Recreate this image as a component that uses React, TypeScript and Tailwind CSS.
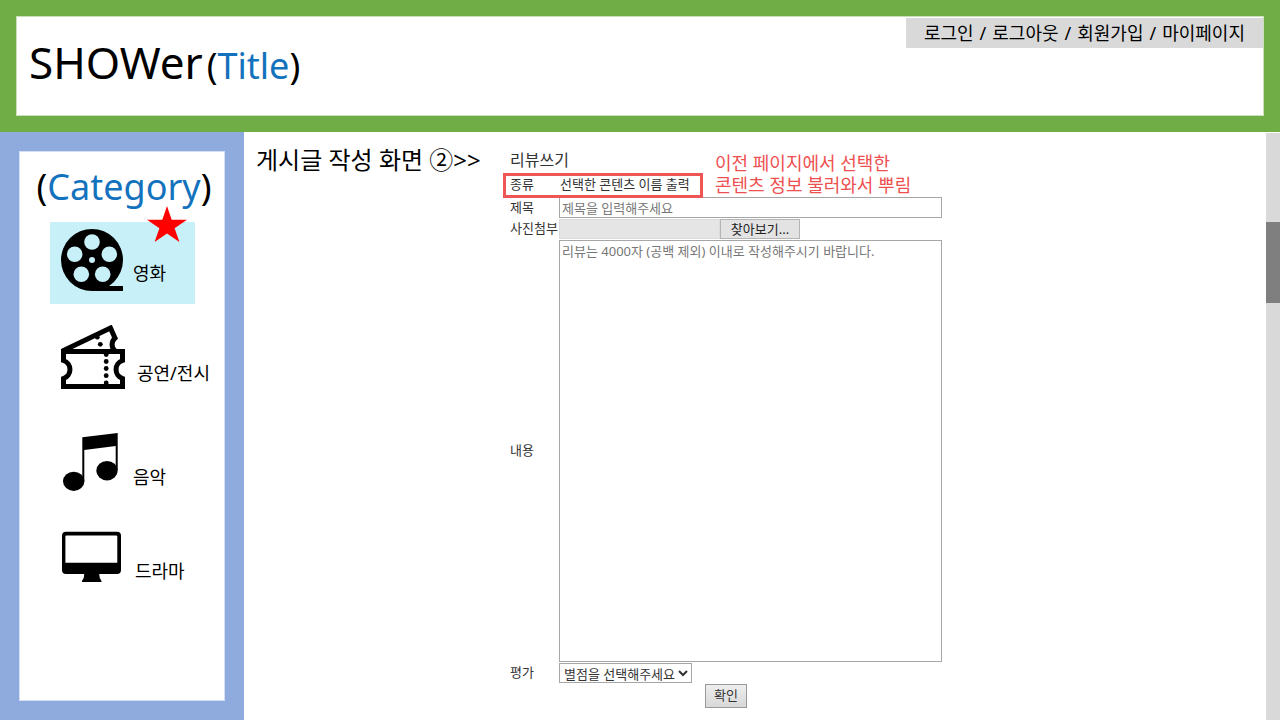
import { useRef, useState } from "react";
import type { ReactNode } from "react";

function ReelIcon() {
  return (
    <svg viewBox="0 0 64 64" className="size-16 shrink-0" aria-hidden="true">
      <circle cx="31" cy="31" r="31" />
      <path d="M31 56 L47 57 H62 V62 H31 Z" />
      <g fill="#c8f0f8">
        <circle cx="31" cy="13" r="7.8" />
        <circle cx="13.7" cy="25.3" r="7.8" />
        <circle cx="48.3" cy="25.3" r="7.8" />
        <circle cx="20.3" cy="45.3" r="7.8" />
        <circle cx="41.7" cy="45.3" r="7.8" />
        <circle cx="31" cy="31" r="3" />
      </g>
    </svg>
  );
}

function TicketIcon() {
  return (
    <svg viewBox="0 0 64 64" className="size-16 shrink-0" aria-hidden="true">
      <g fill="none" stroke="#000" strokeWidth="5">
        <path d="M2.5 26.5 H61.5 V35.5 A9.5 9.5 0 0 0 61.5 53.5 V61.5 H2.5 V53.5 A9.5 9.5 0 0 0 2.5 35.5 Z" />
        <path d="M1.5 26 L49.5 3 L54 13.2 A8.5 8.5 0 0 0 54 26" />
      </g>
      <circle cx="45.2" cy="29.5" r="2.4" />
      <circle cx="45.2" cy="36.5" r="2.4" />
      <circle cx="45.2" cy="43.5" r="2.4" />
      <circle cx="45.2" cy="50.7" r="2.4" />
      <circle cx="45.2" cy="58" r="2.4" />
      <circle cx="39.3" cy="19.3" r="2.4" />
      <circle cx="36.3" cy="12.2" r="2.4" />
    </svg>
  );
}

function MusicIcon() {
  return (
    <svg viewBox="0 0 64 64" className="size-16 shrink-0" aria-hidden="true">
      <path d="M21.3 10.3 L56.7 6 V43 H54.7 V19 L23.3 23 V54 H21.3 Z" />
      <ellipse cx="12.7" cy="54.3" rx="10.7" ry="9.6" />
      <ellipse cx="46" cy="43.7" rx="10.7" ry="9.7" />
    </svg>
  );
}

function MonitorIcon() {
  return (
    <svg viewBox="0 0 64 64" className="size-16 shrink-0" aria-hidden="true">
      <path
        fillRule="evenodd"
        d="M5 2.7 H56 Q60 2.7 60 6.7 V41 Q60 45 56 45 H38.2 Q38.2 49 40.5 52 V53 H21 V52 Q23.3 49 23.3 45 H5 Q1 45 1 41 V6.7 Q1 2.7 5 2.7 Z M5.4 6.4 Q4.4 6.4 4.4 7.4 V33.7 H56.3 V7.4 Q56.3 6.4 55.3 6.4 Z"
      />
    </svg>
  );
}

function Category({ icon, label, labelClass }: { icon: ReactNode; label: string; labelClass: string }) {
  return (
    <a href="#" className="flex items-end gap-2 text-lg/6 text-black">
      {icon}
      <span className={labelClass}>{label}</span>
    </a>
  );
}

function ReviewForm() {
  const picker = useRef<HTMLInputElement>(null);
  const [fileName, setFileName] = useState("");
  return (
    <form className="relative w-[432px] pt-4 text-[13px] text-[#333]" onSubmit={(e) => e.preventDefault()}>
      <h2 className="text-base/6">리뷰쓰기</h2>
      <div className="relative flex h-[25px] items-center">
        <span className="w-[50px] shrink-0">종류</span>
        <span>선택한 콘텐츠 이름 출력</span>
        <div className="pointer-events-none absolute -left-[7px] top-px z-10 h-[25px] w-[200px] border-3 border-[#ee5555]" />
      </div>
      <p className="absolute left-[205px] top-5 whitespace-nowrap text-lg/[22px] text-[#ee5050]">
        이전 페이지에서 선택한
        <br />
        콘텐츠 정보 불러와서 뿌림
      </p>
      <div className="flex h-[21px] items-center">
        <label htmlFor="title" className="w-[49px] shrink-0">제목</label>
        <input
          id="title"
          placeholder="제목을 입력해주세요"
          className="h-full min-w-0 grow border border-[#a6a6a6] bg-white px-0.5 placeholder:text-[#777]"
        />
      </div>
      <div className="flex h-[22px] items-center">
        <label htmlFor="attachment" className="w-[49px] shrink-0 whitespace-nowrap">사진첨부</label>
        <input id="attachment" readOnly value={fileName} className="h-5 w-[161px] border border-[#dcdcdc] bg-[#e5e5e5] px-1" />
        <button
          type="button"
          onClick={() => picker.current?.click()}
          className="h-5 w-20 border border-[#b5b5b5] bg-[#e3e3e3] leading-4 text-[#222]"
        >
          찾아보기...
        </button>
        <input
          ref={picker}
          type="file"
          accept="image/*"
          aria-label="사진첨부"
          className="hidden"
          onChange={(e) => setFileName(e.target.files?.[0]?.name ?? "")}
        />
      </div>
      <div className="flex items-center">
        <label htmlFor="content" className="w-[49px] shrink-0">내용</label>
        <textarea
          id="content"
          placeholder="리뷰는 4000자 (공백 제외) 이내로 작성해주시기 바랍니다."
          className="h-[422px] min-w-0 grow resize-none border border-[#a6a6a6] bg-white px-0.5 leading-5 placeholder:text-[#777]"
        />
      </div>
      <div className="flex h-[22px] items-center">
        <label htmlFor="rating" className="w-[49px] shrink-0">평가</label>
        <select id="rating" className="h-5 w-[133px] border border-[#a6a6a6] bg-white">
          <option>별점을 선택해주세요</option>
          <option>★★★★★</option>
          <option>★★★★</option>
          <option>★★★</option>
          <option>★★</option>
          <option>★</option>
        </select>
      </div>
      <div className="flex justify-center">
        <button type="submit" className="h-6 w-[42px] border border-[#999] bg-linear-to-b from-[#eee] to-[#d8d8d8]">
          확인
        </button>
      </div>
    </form>
  );
}

export default function App() {
  return (
    <div className="flex min-h-screen flex-col bg-white font-['Noto_Sans','Noto_Sans_CJK_KR',sans-serif] text-black">
      <header className="border-16 border-[#70ad47] bg-white">
        <div className="flex h-[100px] items-start justify-between border border-[#c9dfba] pl-3 pt-px">
          <h1 className="flex items-baseline gap-1 pt-3 text-[44px]/[64px]">
            <span>SHOWer</span>
            <span className="text-4xl">(<span className="text-[#1372bd]">Title</span>)</span>
          </h1>
          <nav className="flex h-[30px] items-center gap-1.5 bg-[#d9d9d9] px-[18px] text-lg">
            <a href="#">로그인</a>
            <span>/</span>
            <a href="#">로그아웃</a>
            <span>/</span>
            <a href="#">회원가입</a>
            <span>/</span>
            <a href="#">마이페이지</a>
          </nav>
        </div>
      </header>
      <div className="flex grow">
        <aside className="flex w-[244px] shrink-0 bg-[#8faadc] p-[19px]">
          <div className="grow border border-[#d5e0f3] bg-white">
            <h2 className="h-[70px] pl-1 pt-2.5 text-center text-4xl/[50px]">
              (<span className="text-[#1372bd]">Category</span>)
            </h2>
            <ul className="flex flex-col gap-[38px] pl-[41px]">
              <li className="relative -mb-[17px] -ml-[11px] h-[82px] w-[145px] bg-[#c8f0f8] pl-[11px] pt-[7px]">
                <Category icon={<ReelIcon />} label="영화" labelClass="mb-2" />
                <svg viewBox="0 0 40 36" className="absolute -top-4 left-[97px] h-9 w-10" aria-hidden="true">
                  <path fill="#f00" d="M20 0 L24.7 13.8 H40 L27.6 22.2 L32.4 36 L20 27.5 L7.6 36 L12.4 22.2 L0 13.8 H15.3 Z" />
                </svg>
              </li>
              <li><Category icon={<TicketIcon />} label="공연/전시" labelClass="mb-1 pl-1" /></li>
              <li><Category icon={<MusicIcon />} label="음악" labelClass="mb-0.5" /></li>
              <li><Category icon={<MonitorIcon />} label="드라마" labelClass="mb-2.5 pl-0.5" /></li>
            </ul>
          </div>
        </aside>
        <main className="flex grow items-start pl-3">
          <h2 className="w-[254px] shrink-0 pt-3 text-2xl/8">게시글 작성 화면 ②&gt;&gt;</h2>
          <ReviewForm />
        </main>
        <div className="mt-px w-3.5 shrink-0 bg-[#d9d9d9] pt-[89px]">
          <div className="h-[81px] bg-[#7f7f7f]" />
        </div>
      </div>
    </div>
  );
}
